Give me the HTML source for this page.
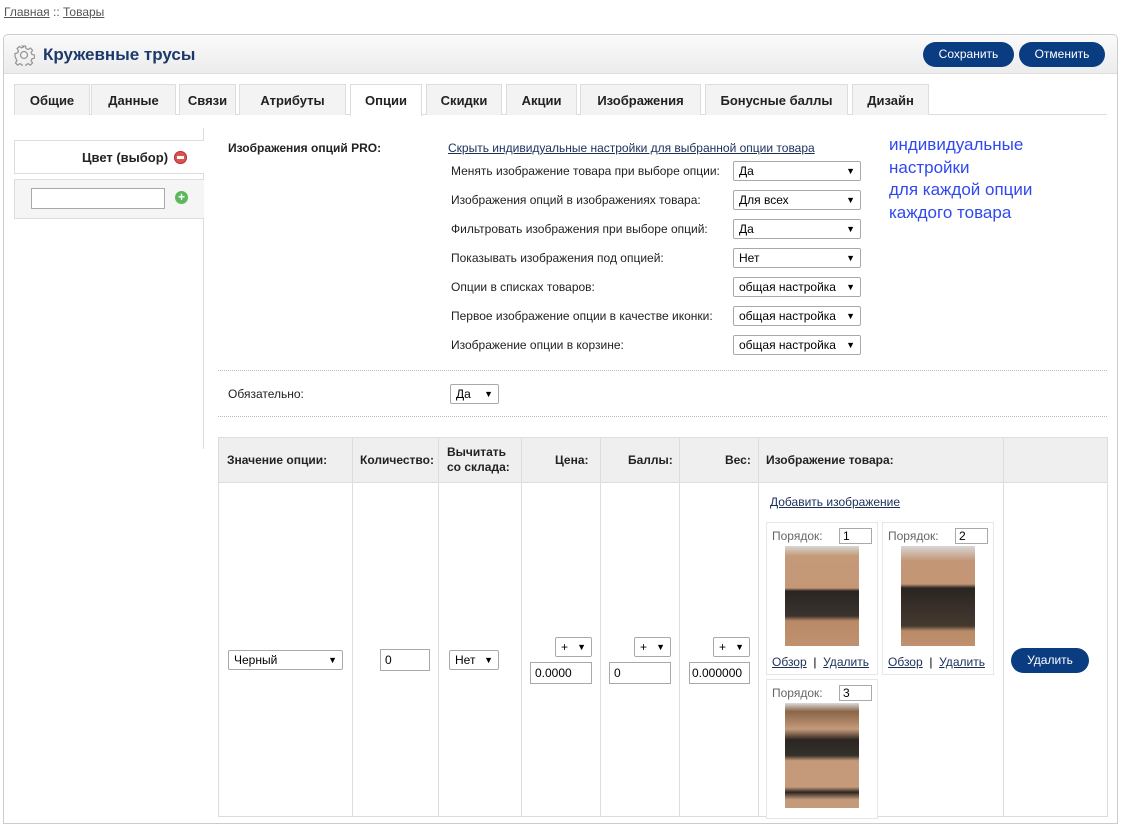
<!DOCTYPE html>
<html><head><meta charset="utf-8"><style>
*{box-sizing:border-box;margin:0;padding:0}
body{width:1122px;height:808px;overflow:hidden;background:#fff;font-family:"Liberation Sans",Arial,sans-serif;font-size:12px;color:#000;position:relative}
.a{position:absolute}
a,.u{color:#1a2f5a;text-decoration:underline}
.sel{position:absolute;border:1px solid #a9a9a9;background:#fff;height:20px;font-size:12px;line-height:18px;padding-left:5px;border-radius:2px}
.sel:after{content:"▼";position:absolute;right:5px;top:0;font-size:9px}
.inp{position:absolute;border:1px solid #a9a9a9;background:#fff;height:22px;font-size:12px;line-height:20px;padding-left:4px}
.tab{position:absolute;top:84px;height:31px;border:1px solid #ddd;border-bottom:none;background:#f3f3f3;font-weight:bold;font-size:13px;text-align:center;line-height:31px;color:#222}
.btn{position:absolute;background:#0a3c82;color:#fff;border-radius:13px;text-align:center;font-size:12px;height:25px;line-height:25px}
.lbl{position:absolute;left:451px;font-size:12px;color:#222}
.th{position:absolute;top:437px;height:46px;font-weight:bold;color:#222}
.vl{position:absolute;width:1px;background:#ddd}
.ib{position:absolute;border:1px solid #e6e6e6;background:#fff}
.ph{position:absolute;font-size:12px;color:#666}
.pi{position:absolute;width:33px;height:16px;border:1px solid #a9a9a9;font-size:12px;line-height:14px;padding-left:3px}
</style></head><body>
<div class="a" style="left:4px;top:5px;color:#555"><span class="u" style="color:#555">Главная</span> :: <span class="u" style="color:#555">Товары</span></div>

<div class="a" style="left:3px;top:34px;width:1115px;height:790px;border:1px solid #ccc;border-radius:5px 5px 0 0"></div>
<div class="a" style="left:4px;top:35px;width:1113px;height:39px;background:linear-gradient(#fafafa,#ececec);border-bottom:1px solid #ddd;border-radius:5px 5px 0 0"></div>
<svg class="a" style="left:13px;top:44px" width="22" height="22" viewBox="0 0 22 22"><g fill="none" stroke="#999" stroke-width="1.3"><circle cx="11" cy="11" r="3.5"/><path d="M9.5 2h3l.6 2.6 2 .9 2.3-1.4 2.1 2.1-1.4 2.3.9 2 2.6.6v3l-2.6.6-.9 2 1.4 2.3-2.1 2.1-2.3-1.4-2 .9-.6 2.6h-3l-.6-2.6-2-.9-2.3 1.4-2.1-2.1 1.4-2.3-.9-2L2 12.5v-3l2.6-.6.9-2-1.4-2.3 2.1-2.1 2.3 1.4 2-.9z"/></g></svg>
<div class="a" style="left:43px;top:45px;font-size:17px;font-weight:bold;color:#1b3a6b">Кружевные трусы</div>
<div class="btn" style="left:923px;top:42px;width:91px">Сохранить</div>
<div class="btn" style="left:1019px;top:42px;width:86px">Отменить</div>

<div class="a" style="left:14px;top:114px;width:1093px;height:1px;background:#ddd"></div>
<div class="tab" style="left:14px;width:76px">Общие</div>
<div class="tab" style="left:91px;width:85px">Данные</div>
<div class="tab" style="left:179px;width:57px">Связи</div>
<div class="tab" style="left:239px;width:107px">Атрибуты</div>
<div class="tab" style="left:350px;width:72px;background:#fff;height:32px">Опции</div>
<div class="tab" style="left:426px;width:76px">Скидки</div>
<div class="tab" style="left:506px;width:71px">Акции</div>
<div class="tab" style="left:580px;width:121px">Изображения</div>
<div class="tab" style="left:705px;width:143px">Бонусные баллы</div>
<div class="tab" style="left:852px;width:77px">Дизайн</div>

<div class="vl" style="left:203px;top:128px;height:321px"></div>
<div class="a" style="left:14px;top:140px;width:190px;height:34px;border:1px solid #ddd;border-right:none;background:#fff"></div>
<div class="a" style="left:82px;top:150px;font-size:13px;font-weight:bold;color:#222">Цвет (выбор)</div>
<div class="a" style="left:174px;top:151px;width:13px;height:13px;border-radius:50%;background:#d9534f;box-shadow:inset 0 0 0 1px #b33"><div style="position:absolute;left:3px;top:5px;width:7px;height:3px;background:#fff"></div></div>
<div class="a" style="left:14px;top:179px;width:190px;height:40px;border:1px solid #ddd;border-right:none;background:#f5f5f5"></div>
<div class="a" style="left:31px;top:188px;width:134px;height:21px;border:1px solid #a9a9a9;background:#fff"></div>
<div class="a" style="left:175px;top:191px;width:13px;height:13px;border-radius:50%;background:#5cb85c;color:#fff;font-size:12px;line-height:12px;text-align:center;font-weight:bold">+</div>

<div class="a" style="left:228px;top:141px;font-weight:bold;color:#222">Изображения опций PRO:</div>
<div class="a u" style="left:448px;top:141px">Скрыть индивидуальные настройки для выбранной опции товара</div>
<div class="lbl" style="top:164px">Менять изображение товара при выборе опции:</div>
<div class="lbl" style="top:193px">Изображения опций в изображениях товара:</div>
<div class="lbl" style="top:222px">Фильтровать изображения при выборе опций:</div>
<div class="lbl" style="top:251px">Показывать изображения под опцией:</div>
<div class="lbl" style="top:280px">Опции в списках товаров:</div>
<div class="lbl" style="top:309px">Первое изображение опции в качестве иконки:</div>
<div class="lbl" style="top:338px">Изображение опции в корзине:</div>
<div class="sel" style="left:733px;top:161px;width:128px">Да</div>
<div class="sel" style="left:733px;top:190px;width:128px">Для всех</div>
<div class="sel" style="left:733px;top:219px;width:128px">Да</div>
<div class="sel" style="left:733px;top:248px;width:128px">Нет</div>
<div class="sel" style="left:733px;top:277px;width:128px">общая настройка</div>
<div class="sel" style="left:733px;top:306px;width:128px">общая настройка</div>
<div class="sel" style="left:733px;top:335px;width:128px">общая настройка</div>
<div class="a" style="left:889px;top:134px;font-size:17px;line-height:22.5px;color:#3048f0">индивидуальные<br>настройки<br>для каждой опции<br>каждого товара</div>

<div class="a" style="left:218px;top:370px;width:889px;border-top:1px dotted #bbb"></div>
<div class="a" style="left:228px;top:387px;color:#222">Обязательно:</div>
<div class="sel" style="left:450px;top:384px;width:49px">Да</div>
<div class="a" style="left:218px;top:416px;width:889px;border-top:1px dotted #bbb"></div>

<div class="a" style="left:218px;top:437px;width:890px;height:380px;border:1px solid #ddd"></div>
<div class="a" style="left:219px;top:438px;width:888px;height:45px;background:#efefef;border-bottom:1px solid #ddd"></div>
<div class="vl" style="left:352px;top:437px;height:380px"></div>
<div class="vl" style="left:438px;top:437px;height:380px"></div>
<div class="vl" style="left:521px;top:437px;height:380px"></div>
<div class="vl" style="left:600px;top:437px;height:380px"></div>
<div class="vl" style="left:679px;top:437px;height:380px"></div>
<div class="vl" style="left:758px;top:437px;height:380px"></div>
<div class="vl" style="left:1003px;top:437px;height:380px"></div>
<div class="a" style="left:227px;top:453px;font-weight:bold;color:#222">Значение опции:</div>
<div class="a" style="left:360px;top:453px;font-weight:bold;color:#222">Количество:</div>
<div class="a" style="left:447px;top:445px;font-weight:bold;color:#222;line-height:15px">Вычитать<br>со склада:</div>
<div class="a" style="left:555px;top:453px;font-weight:bold;color:#222">Цена:</div>
<div class="a" style="left:628px;top:453px;font-weight:bold;color:#222">Баллы:</div>
<div class="a" style="left:725px;top:453px;font-weight:bold;color:#222">Вес:</div>
<div class="a" style="left:766px;top:453px;font-weight:bold;color:#222">Изображение товара:</div>

<div class="sel" style="left:228px;top:650px;width:115px">Черный</div>
<div class="inp" style="left:380px;top:649px;width:50px">0</div>
<div class="sel" style="left:449px;top:650px;width:50px">Нет</div>
<div class="sel" style="left:555px;top:637px;width:37px">+</div>
<div class="inp" style="left:530px;top:662px;width:62px">0.0000</div>
<div class="sel" style="left:634px;top:637px;width:37px">+</div>
<div class="inp" style="left:609px;top:662px;width:62px">0</div>
<div class="sel" style="left:713px;top:637px;width:37px">+</div>
<div class="inp" style="left:689px;top:662px;width:61px;padding-left:2px">0.000000</div>

<div class="a u" style="left:770px;top:495px">Добавить изображение</div>
<div class="ib" style="left:766px;top:522px;width:112px;height:153px"></div>
<div class="ib" style="left:882px;top:522px;width:112px;height:153px"></div>
<div class="ib" style="left:766px;top:679px;width:112px;height:140px"></div>
<div class="ph" style="left:772px;top:529px">Порядок:</div><div class="pi" style="left:839px;top:528px">1</div>
<div class="ph" style="left:888px;top:529px">Порядок:</div><div class="pi" style="left:955px;top:528px">2</div>
<div class="ph" style="left:772px;top:686px">Порядок:</div><div class="pi" style="left:839px;top:685px">3</div>
<div class="a" style="left:785px;top:546px;width:74px;height:100px;background:linear-gradient(#d7d7d5 0%,#c49a78 10%,#c59777 42%,#2a2522 45%,#3a332e 70%,#b98a68 75%,#c0916f 100%)"></div>
<div class="a" style="left:901px;top:546px;width:74px;height:100px;background:linear-gradient(#d7d7d5 0%,#c39676 15%,#c49676 38%,#2a2522 42%,#44392f 80%,#b98a68 85%,#bf916f 100%)"></div>
<div class="a" style="left:785px;top:703px;width:74px;height:105px;background:linear-gradient(#dddcda 0%,#8a6548 8%,#c49a7a 25%,#2c2621 35%,#33302a 50%,#c49a7a 55%,#c49a7a 80%,#2c2621 85%,#c49a7a 92%)"></div>
<div class="a" style="left:772px;top:655px"><span class="u">Обзор</span> &nbsp;|&nbsp; <span class="u">Удалить</span></div>
<div class="a" style="left:888px;top:655px"><span class="u">Обзор</span> &nbsp;|&nbsp; <span class="u">Удалить</span></div>
<div class="btn" style="left:1011px;top:648px;width:78px;height:25px">Удалить</div>
</body></html>
